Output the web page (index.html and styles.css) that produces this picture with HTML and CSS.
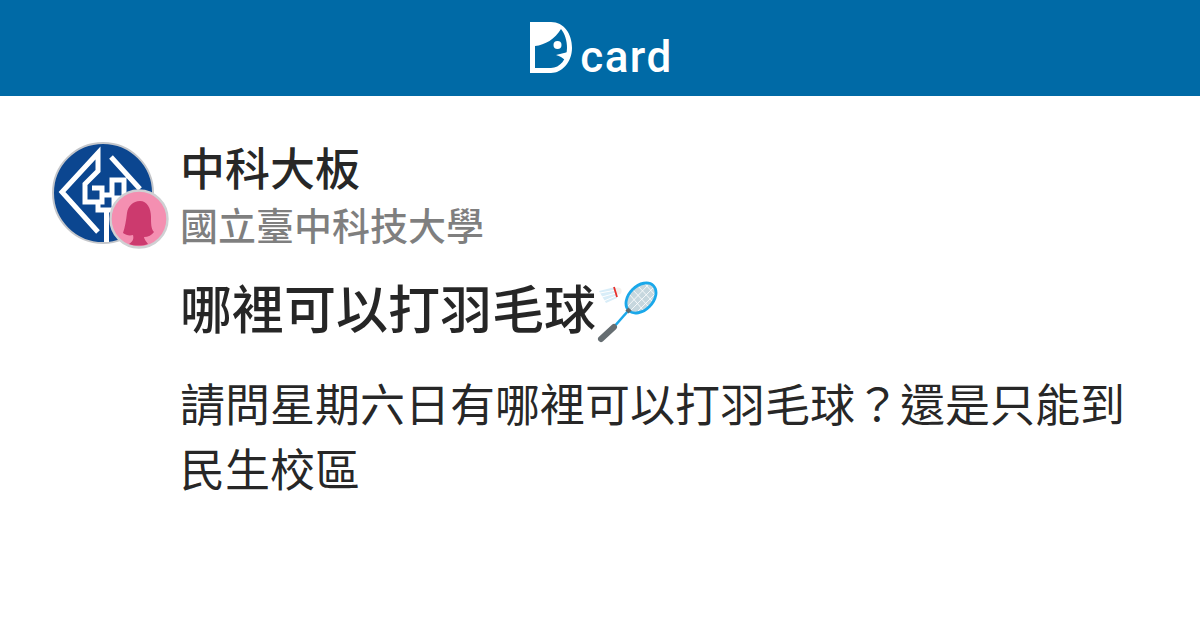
FILE: index.html
```html
<!DOCTYPE html>
<html lang="zh-Hant">
<head>
<meta charset="utf-8">
<title>Dcard</title>
<link rel="stylesheet" href="styles.css">
</head>
<body>
<header class="bar">
  <div class="logo">
    <svg class="logo-d" width="42" height="51" viewBox="0 0 42 51">
      <path fill="#fff" fill-rule="evenodd" d="M0 0H21C34 0 42 12 42 26C42 40 32 51 21 51H0ZM5 24V46H21C30 46 37 37 37 26C37 19 35 12 31 7C25 17 15 23 5 24Z"/>
      <circle cx="27.5" cy="23" r="4" fill="#fff"/>
      <path fill="#fff" d="M26 33L38 30L36 39C33 36 30 34 26 33Z"/>
    </svg>
    <span class="logo-text">card</span>
  </div>
</header>
<main class="post">
  <div class="avatars">
    <svg class="school" width="102" height="102" viewBox="0 0 102 102">
      <circle cx="51" cy="51" r="50" fill="#0b4690" stroke="#c4c6ca" stroke-width="2"/>
      <path fill="none" stroke="#fff" stroke-width="5" d="M46 90L10 50L46 11V29L33 42V60H50V46H40"/>
      <path fill="none" stroke="#fff" stroke-width="5" d="M59 15L88 47M50 53H60V38H72V56H62V68H46V60"/>
      <path fill="#fff" d="M52 68h5v32h-5z"/>
    </svg>
    <svg class="gender" width="60" height="60" viewBox="0 0 60 60">
      <circle cx="30" cy="30" r="28.5" fill="#f48fb1" stroke="#cfd0d3" stroke-width="2.4"/>
      <path fill="#cc3a6e" d="M31 12C24 12 19 17 18 24C17 32 16 38 14 44C17 46 20 47 24 46C25 50 24 52 20 55C25 57 34 57 39 55C37 52 35 50 35 48C39 48 43 46 45 43C42 40 42 34 42 28C42 19 38 12 31 12Z"/>
    </svg>
  </div>
  <div class="content">
    <div class="forum">中科大板</div>
    <div class="school-name">國立臺中科技大學</div>
    <h1 class="title">哪裡可以打羽毛球<svg class="emoji" width="62" height="62" viewBox="0 0 62 62">
      <path fill="#d8edf8" d="M3 10L19 6L21 17L10 22Z"/>
      <path fill="none" stroke="#fff" stroke-width="1" d="M4 12L20 9M6 16L20 12M8 20L20 15"/>
      <circle cx="22" cy="10" r="3.6" fill="#f4f1ee"/>
      <path fill="none" stroke="#e8302c" stroke-width="1.8" d="M18 6L21 16"/>
      <ellipse cx="45" cy="17" rx="17.500" ry="12" transform="rotate(-45 45 17)" fill="#c6d7de"/>
      <path fill="none" stroke="#fff" stroke-width="1" opacity=".8" d="M34 14L47 29M37 9L53 26M42 5L57 21M49 3L59 14M32 25L52 4M35 29L58 6M42 30L60 12"/>
      <ellipse cx="45" cy="17" rx="17.500" ry="12" transform="rotate(-45 45 17)" fill="none" stroke="#1aa8ea" stroke-width="2.8"/>
      <path fill="none" stroke="#1aa8ea" stroke-width="2.6" d="M32 30L17 47"/>
      <path fill="none" stroke="#5f6b70" stroke-width="4.500" d="M31 31L34 28"/>
      <path fill="none" stroke="#666e72" stroke-width="6" stroke-linecap="round" d="M18 46L5 58"/>
    </svg></h1>
    <p class="body">請問星期六日有哪裡可以打羽毛球？還是只能到民生校區</p>
  </div>
</main>
</body>
</html>
```
FILE: styles.css
```css
* { box-sizing: border-box; }
html, body { margin: 0; padding: 0; }
body {
  width: 1200px;
  height: 630px;
  overflow: hidden;
  background: #fff;
  font-family: "Noto Sans CJK TC", "Noto Sans", sans-serif;
}
.bar {
  height: 96px;
  background: #006aa6;
  display: flex;
  justify-content: center;
  align-items: flex-start;
  padding: 22px 0 0 3px;
}
.logo { display: flex; align-items: flex-end; gap: 8px; height: 51px; }
.logo-d { display: block; }
.logo-text {
  font-family: "Roboto", sans-serif;
  font-size: 44px;
  font-weight: 500;
  line-height: 32px;
  color: #fff;
  letter-spacing: 1.500px;
}
.post {
  display: flex;
  padding: 43px 0 0 52px;
  gap: 26px;
}
.avatars { position: relative; width: 102px; height: 102px; flex: none; margin-top: 3px; }
.school { display: block; }
.gender { position: absolute; left: 57px; top: 47px; }
.content { width: 945px; }
.forum {
  font-size: 45px;
  font-weight: 500;
  line-height: 56px;
  color: rgba(0, 0, 0, .85);
}
.school-name {
  font-size: 38px;
  font-weight: 500;
  line-height: 57px;
  color: rgba(0, 0, 0, .5);
}
.title {
  margin: 16px 0 0;
  font-size: 52px;
  font-weight: 500;
  line-height: 78px;
  color: rgba(0, 0, 0, .85);
  display: flex;
  align-items: flex-start;
}
.emoji { display: block; flex: none; margin-top: 13px; }
.body {
  margin: 24px 0 0;
  font-size: 45px;
  line-height: 65px;
  color: rgba(0, 0, 0, .85);
}
```
